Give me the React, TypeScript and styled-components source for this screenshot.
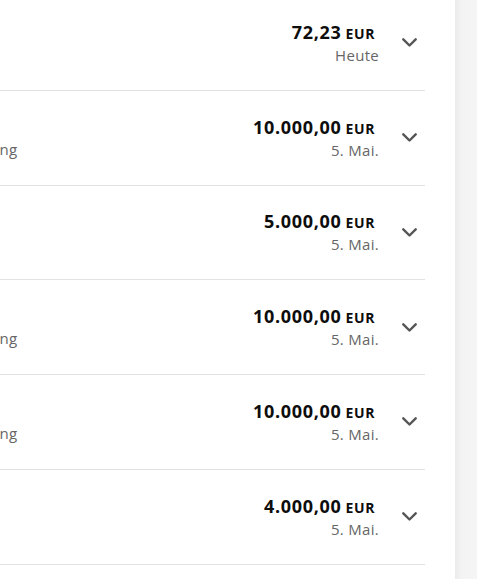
import React from "react";
import styled, { createGlobalStyle } from "styled-components";

const Global = createGlobalStyle`
  html, body { margin: 0; padding: 0; background: #ffffff; }
  body { font-family: "Open Sans", "Noto Sans", sans-serif; overflow: hidden; }
`;

const Page = styled.div`
  display: flex;
  width: 477px;
  height: 579px;
  overflow: hidden;
`;

const Main = styled.main`
  width: 455px;
  flex: none;
  overflow: hidden;
  background: #ffffff;
`;

const Side = styled.aside`
  flex: 1;
  background: linear-gradient(to right, #ebebeb 0px, #f3f3f3 6px, #f5f5f5 100%);
`;

const List = styled.ul`
  list-style: none;
  margin: -4px 0 0 -200px;
  padding: 0;
  width: 625px;
`;

const Row = styled.li`
  display: flex;
  align-items: center;
  box-sizing: border-box;
  height: 94.75px;
  border-bottom: 1px solid #e2e2e2;
  padding: 0 8px 0 0;
`;

const Desc = styled.div`
  flex: 1;
  min-width: 0;
  padding-left: 122px;
  display: flex;
  flex-direction: column;
`;

const Title = styled.span`
  font-size: 16px;
  line-height: 22px;
  font-weight: 700;
  color: #111;
  white-space: nowrap;
`;

const Sub = styled.span`
  font-size: 15px;
  line-height: 22px;
  color: #666;
  white-space: nowrap;
  letter-spacing: 0.3px;
`;

const AmountBlock = styled.div`
  display: flex;
  flex-direction: column;
  align-items: flex-end;
  text-align: right;
`;

const AmountLine = styled.div`
  font-size: 18px;
  line-height: 22px;
  font-weight: 700;
  color: #0d0d0d;
  letter-spacing: 0.7px;
  padding-right: 4px;
  white-space: nowrap;
  transform: translateY(1px);
`;

const Currency = styled.span`
  font-size: 14px;
  letter-spacing: 0.6px;
  margin-left: 4px;
`;

const DateLine = styled.div`
  font-size: 15px;
  line-height: 22px;
  color: #666;
  letter-spacing: 0.3px;
  white-space: nowrap;
`;

const Toggle = styled.button`
  display: flex;
  align-items: center;
  justify-content: center;
  width: 15px;
  height: 15px;
  margin-left: 23px;
  padding: 0;
  border: none;
  background: transparent;
  cursor: pointer;
`;

const Chevron = () => (
  <svg width="15" height="9" viewBox="0 0 15 9" fill="none">
    <polyline
      points="1.3,1.3 7.5,7.5 13.7,1.3"
      stroke="#555"
      strokeWidth="2.4"
      strokeLinecap="round"
      strokeLinejoin="round"
    />
  </svg>
);

type Tx = { title: string; sub: string; amount: string; date: string };

const items: Tx[] = [
  { title: "Zinsen", sub: "Gutschrift", amount: "72,23", date: "Heute" },
  { title: "Sparen", sub: "Überweisung", amount: "10.000,00", date: "5. Mai." },
  { title: "Depot", sub: "Gutschrift", amount: "5.000,00", date: "5. Mai." },
  { title: "Sparen", sub: "Überweisung", amount: "10.000,00", date: "5. Mai." },
  { title: "Sparen", sub: "Überweisung", amount: "10.000,00", date: "5. Mai." },
  { title: "Depot", sub: "Gutschrift", amount: "4.000,00", date: "5. Mai." },
  { title: "Sparen", sub: "Überweisung", amount: "2.000,00", date: "4. Mai." },
];

export default function App() {
  return (
    <>
      <Global />
      <Page>
        <Main>
          <List>
            {items.map((t, i) => (
              <Row key={i}>
                <Desc>
                  <Title>{t.title}</Title>
                  <Sub>{t.sub}</Sub>
                </Desc>
                <AmountBlock>
                  <AmountLine>
                    {t.amount}
                    <Currency>EUR</Currency>
                  </AmountLine>
                  <DateLine>{t.date}</DateLine>
                </AmountBlock>
                <Toggle aria-label="Details">
                  <Chevron />
                </Toggle>
              </Row>
            ))}
          </List>
        </Main>
        <Side />
      </Page>
    </>
  );
}
